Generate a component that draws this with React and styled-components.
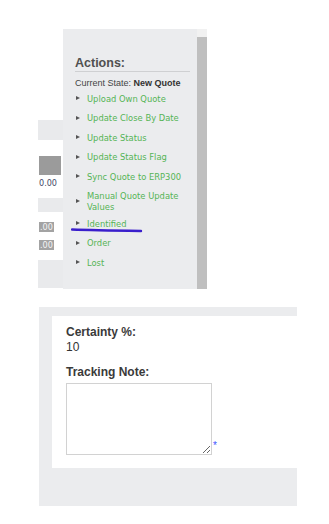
import React from "react";
import styled, { createGlobalStyle } from "styled-components";

const Global = createGlobalStyle`
  html, body { margin: 0; padding: 0; background: #ffffff; }
  body { font-family: "Liberation Sans", Arial, sans-serif; width: 329px; height: 524px; overflow: hidden; }
`;

const Page = styled.div`
  display: flex;
  flex-direction: column;
  width: 329px;
`;

const TopArea = styled.div`
  display: flex;
  align-items: flex-start;
  padding: 29px 0 0 38px;
`;

const LeftStrip = styled.div`
  width: 25px;
  margin-top: 91px;
  height: 168px;
  background: #e9eaec;
  display: flex;
  flex-direction: column;
  overflow: hidden;
`;

const StripGap = styled.div`
  height: ${(p) => p.$h}px;
  flex: none;
`;

const StripWhite = styled.div`
  height: ${(p) => p.$h}px;
  background: #ffffff;
  display: flex;
  flex-direction: column;
  align-items: flex-start;
  padding: ${(p) => p.$pt}px 0 0 1px;
  box-sizing: border-box;
  gap: ${(p) => p.$gap || 0}px;
  flex: none;
`;

const DarkBox = styled.div`
  width: 22px;
  height: 19px;
  background: #9b9b9b;
`;

const Amount = styled.div`
  font-family: "DejaVu Sans Condensed", "DejaVu Sans", sans-serif;
  font-size: 9px;
  line-height: 11px;
  color: #3f4a66;
  margin-top: 3px;
  white-space: nowrap;
`;

const Chip = styled.div`
  height: 10px;
  background: #a3a3a3;
  color: #f4f4f4;
  font-family: "DejaVu Sans Condensed", "DejaVu Sans", sans-serif;
  font-size: 9px;
  line-height: 10px;
  padding: 0 1px;
  white-space: nowrap;
`;

const Panel = styled.div`
  width: 134px;
  height: 260px;
  background: #ebecee;
  box-sizing: border-box;
  padding: 26px 7px 0 12px;
  display: flex;
  flex-direction: column;
`;

const Scroll = styled.div`
  width: 10px;
  height: 260px;
  background: linear-gradient(#f1f1f1 0, #f1f1f1 8px, #bfbfbf 8px);
`;

const Title = styled.div`
  font-family: "Liberation Sans", Arial, sans-serif;
  font-weight: bold;
  font-size: 12.5px;
  line-height: 16px;
  color: #505050;
  border-bottom: 1px solid #cfd0d2;
`;

const StateLine = styled.div`
  font-family: "Liberation Sans", Arial, sans-serif;
  font-size: 9px;
  line-height: 11px;
  color: #444;
  margin-top: 6px;
  b { font-weight: bold; color: #333; }
`;

const List = styled.ul`
  list-style: none;
  margin: -0.5px 0 0 0;
  padding: 0;
  display: flex;
  flex-direction: column;
`;

const Item = styled.li`
  position: relative;
  display: flex;
  align-items: center;
  padding: 4px 0 4.5px 1px;
  margin-bottom: ${(p) => (p.$tight ? -3 : 0)}px;
`;

const Arrow = styled.span`
  flex: none;
  width: 0;
  height: 0;
  border-left: 4px solid #555;
  border-top: 2.5px solid transparent;
  border-bottom: 2.5px solid transparent;
  margin-right: 7px;
`;

const ItemText = styled.span`
  font-family: "DejaVu Sans Condensed", "DejaVu Sans", sans-serif;
  font-size: 9.3px;
  line-height: 11px;
  color: #55b455;
`;

const Scribble = styled.svg`
  position: absolute;
  left: -4px;
  top: 13px;
  width: 72px;
  height: 6px;
  pointer-events: none;
`;

const Bottom = styled.div`
  margin: 18px 0 0 39px;
  width: 258px;
  height: 199px;
  background: #ebecee;
  display: flex;
  flex-direction: column;
`;

const ClipHead = styled.div`
  height: 2px;
  overflow: hidden;
  padding-left: 16px;
  flex: none;
`;

const HeadText = styled.div`
  font-family: "Liberation Sans", Arial, sans-serif;
  font-weight: bold;
  font-size: 12px;
  line-height: 14px;
  color: #555;
  margin-top: -12px;
`;

const Card = styled.div`
  margin: 7px 0 0 13px;
  height: 152px;
  background: #ffffff;
  box-sizing: border-box;
  padding: 9px 0 0 14px;
  display: flex;
  flex-direction: column;
`;

const Label = styled.div`
  font-family: "Liberation Sans", Arial, sans-serif;
  font-weight: bold;
  font-size: 12px;
  line-height: 15px;
  color: #3a3a3a;
  margin-top: ${(p) => p.$mt || 0}px;
`;

const Value = styled.div`
  font-family: "Liberation Sans", Arial, sans-serif;
  font-size: 12px;
  line-height: 14px;
  color: #333;
`;

const NoteRow = styled.div`
  display: flex;
  align-items: flex-end;
  margin-top: 3px;
`;

const Note = styled.textarea`
  width: 146px;
  height: 72px;
  box-sizing: border-box;
  border: 1px solid #d2d2d2;
  margin: 0;
  padding: 2px;
  font-family: "Liberation Sans", Arial, sans-serif;
  font-size: 12px;
  background: #fff;
  outline: none;
`;

const Required = styled.span`
  color: #3b55ff;
  font-family: "Liberation Sans", Arial, sans-serif;
  font-size: 10px;
  line-height: 10px;
  margin: 0 0 4px 1px;
`;

const actions = [
  "Upload Own Quote",
  "Update Close By Date",
  "Update Status",
  "Update Status Flag",
  "Sync Quote to ERP300",
  "Manual Quote Update Values",
  "Identified",
  "Order",
  "Lost",
];

export default function App() {
  return (
    <Page>
      <Global />
      <TopArea>
        <LeftStrip>
          <StripGap $h={20} />
          <StripWhite $h={58} $pt={16}>
            <DarkBox />
            <Amount>0.00</Amount>
          </StripWhite>
          <StripGap $h={14} />
          <StripWhite $h={48} $pt={10} $gap={8}>
            <Chip>.00</Chip>
            <Chip>.00</Chip>
          </StripWhite>
        </LeftStrip>
        <Panel>
          <Title>Actions:</Title>
          <StateLine>
            Current State: <b>New Quote</b>
          </StateLine>
          <List>
            {actions.map((a) => (
              <Item key={a} $tight={a.startsWith("Manual")}>
                <Arrow />
                <ItemText>{a}</ItemText>
                {a === "Identified" && (
                  <Scribble viewBox="0 0 72 6">
                    <path
                      d="M1 2.5 C 20 3.2, 45 3.6, 70 4"
                      stroke="#3a1fcc"
                      strokeWidth="2.4"
                      fill="none"
                      strokeLinecap="round"
                    />
                  </Scribble>
                )}
              </Item>
            ))}
          </List>
        </Panel>
        <Scroll />
      </TopArea>
      <Bottom>
        <ClipHead>
          <HeadText>Status</HeadText>
        </ClipHead>
        <Card>
          <Label>Certainty %:</Label>
          <Value>10</Value>
          <Label $mt={10.5}>Tracking Note:</Label>
          <NoteRow>
            <Note />
            <Required>*</Required>
          </NoteRow>
        </Card>
      </Bottom>
    </Page>
  );
}
